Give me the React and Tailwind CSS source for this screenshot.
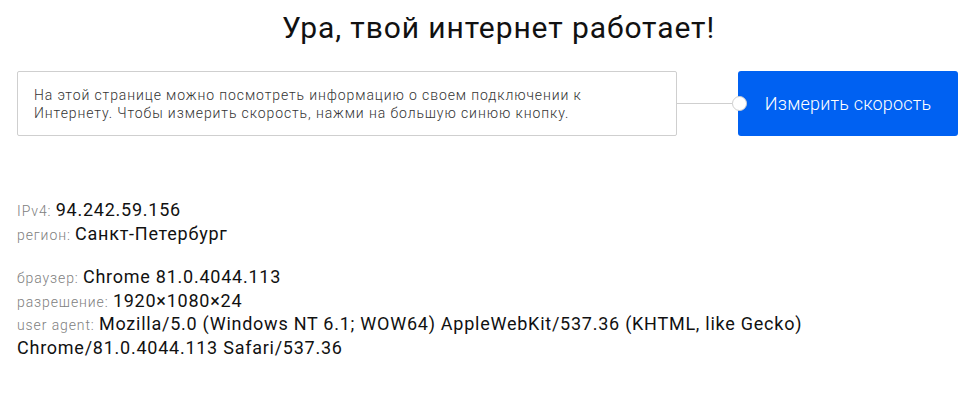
export default function App() {
  const font = { fontFamily: "Roboto, 'Noto Sans', sans-serif" };
  const label = "text-[14px] leading-none font-light text-[#808080] tracking-[0.9px]";

  return (
    <div className="bg-white w-[975px] h-[417px] px-[17px] text-black" style={font}>
      <h1 className="pt-[8px] pl-[22px] text-center text-[30px] leading-[40px] font-normal tracking-[0.9px] text-[#111]">
        Ура, твой интернет работает!
      </h1>

      <div className="mt-[23px] flex items-center">
        <div className="w-[661px] h-[65px] border border-[#cfcfcf] rounded-[2px] flex items-center px-[16px]">
          <p className="text-[14px] leading-[18px] font-light tracking-[0.9px] text-[#333]">
            На этой странице можно посмотреть информацию о своем подключении к
            <br />
            Интернету. Чтобы измерить скорость, нажми на большую синюю кнопку.
          </p>
        </div>
        <div className="relative flex items-center w-[61px] h-[65px]">
          <div className="h-px flex-1 bg-[#cfcfcf]" />
          <div className="absolute right-[-9px] top-[25px] w-[15px] h-[15px] rounded-full bg-white border border-[#cfcfcf] z-10" />
        </div>
        <button className="w-[220px] h-[65px] bg-[#0061f2] rounded-[3px] text-white text-[18px] font-light tracking-[0.2px]">
          Измерить скорость
        </button>
      </div>

      <div className="mt-[62px] text-[18px] leading-[23.5px] tracking-[0.75px] text-[#111]">
        <div>
          <span className={label}>IPv4: </span>
          94.242.59.156
        </div>
        <div>
          <span className={label}>регион: </span>
          Санкт-Петербург
        </div>

        <div className="mt-[20px]">
          <span className={label}>браузер: </span>
          Chrome 81.0.4044.113
        </div>
        <div>
          <span className={label}>разрешение: </span>
          1920×1080×24
        </div>
        <div>
          <span className={label}>user agent: </span>
          Mozilla/5.0 (Windows NT 6.1; WOW64) AppleWebKit/537.36 (KHTML, like Gecko)
          <br />
          Chrome/81.0.4044.113 Safari/537.36
        </div>
      </div>
    </div>
  );
}
